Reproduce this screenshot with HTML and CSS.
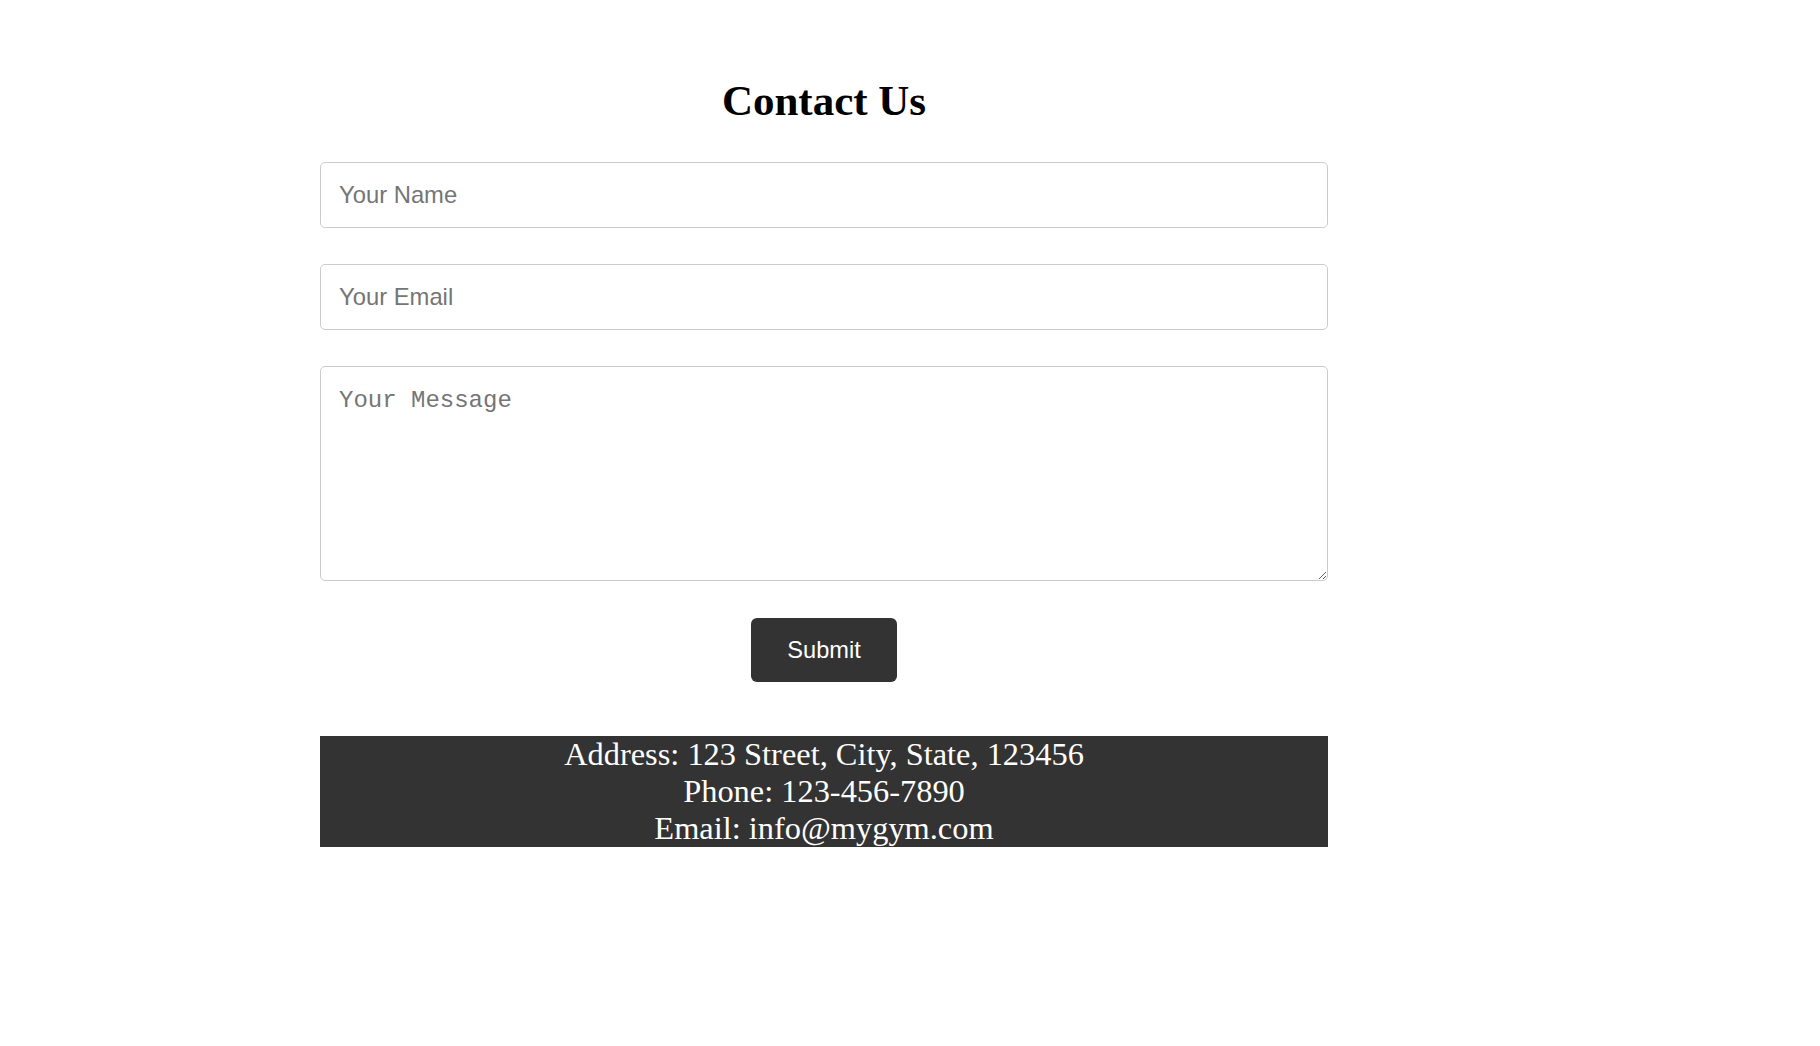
FILE: index.html
```html
<!DOCTYPE html>
<html lang="en">
<head>
<meta charset="utf-8">
<title>Contact Us</title>
<link rel="stylesheet" href="styles.css">
</head>
<body>
<main class="page">
  <h1 class="title">Contact Us</h1>
  <form class="form">
    <input class="field" type="text" placeholder="Your Name">
    <input class="field" type="email" placeholder="Your Email">
    <textarea class="field message" placeholder="Your Message"></textarea>
    <div class="actions">
      <button class="submit" type="button">Submit</button>
    </div>
  </form>
  <footer class="footer">
    <div>Address: 123 Street, City, State, 123456</div>
    <div>Phone: 123-456-7890</div>
    <div>Email: info@mygym.com</div>
  </footer>
</main>
</body>
</html>
```

FILE: styles.css
```css
html, body {
  margin: 0;
  padding: 0;
  background: #fff;
}

.page {
  width: 1008px;
  margin-left: 320px;
  padding-top: 77px;
}

.title {
  margin: 0 0 37px;
  font-family: "Liberation Serif", serif;
  font-weight: bold;
  font-size: 43px;
  line-height: 48px;
  text-align: center;
  color: #000;
}

.form {
  margin: 0;
}

.field {
  display: block;
  box-sizing: border-box;
  width: 100%;
  height: 66px;
  margin: 0 0 36px;
  padding: 0 18px;
  border: 1px solid #ccc;
  border-radius: 5px;
  font-family: "Liberation Sans", Arial, sans-serif;
  font-size: 23.8px;
  color: #222;
  background: #fff;
}

.field::placeholder {
  color: #757575;
}

.message {
  height: 215px;
  padding: 20px 18px;
  margin-bottom: 37px;
  font-family: "Liberation Mono", monospace;
  font-size: 24px;
  resize: vertical;
}

.actions {
  text-align: center;
}

.submit {
  height: 64px;
  padding: 0 36px;
  border: none;
  border-radius: 6px;
  background: #333;
  color: #fff;
  font-family: "Liberation Sans", Arial, sans-serif;
  font-size: 23.6px;
  cursor: pointer;
}

.footer {
  margin-top: 54px;
  background: #333;
  color: #fff;
  font-family: "Liberation Serif", serif;
  font-size: 32.4px;
  line-height: 37px;
  text-align: center;
}
```
